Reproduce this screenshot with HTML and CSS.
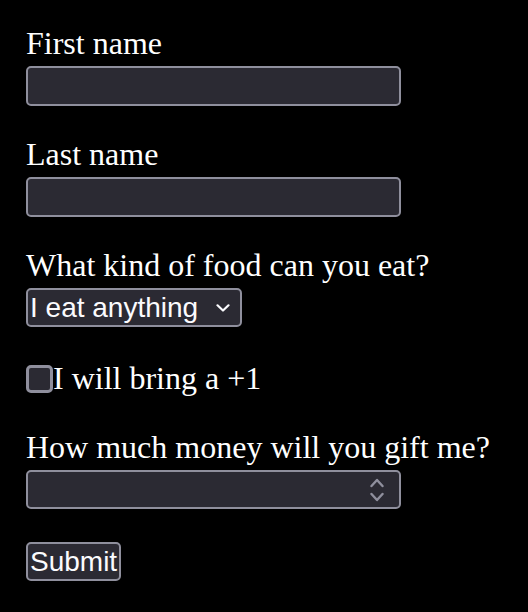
FILE: index.html
```html
<!DOCTYPE html>
<html lang="en">
<head>
<meta charset="utf-8">
<title>RSVP</title>
<link rel="stylesheet" href="styles.css">
</head>
<body>
<form class="form">
  <div class="field field-first">
    <label class="label" for="first">First name</label>
    <input class="text-input" id="first" type="text">
  </div>
  <div class="field">
    <label class="label" for="last">Last name</label>
    <input class="text-input" id="last" type="text">
  </div>
  <div class="field">
    <label class="label" for="food">What kind of food can you eat?</label>
    <div class="select-box">
      <select class="select" id="food">
        <option>I eat anything</option>
        <option>Vegetarian</option>
        <option>Vegan</option>
      </select>
      <svg class="chev" width="14" height="8" viewBox="0 0 14 8" aria-hidden="true"><path d="M1.5 1.3 L7 6.5 L12.5 1.3" fill="none" stroke="#fbfbfe" stroke-width="2.2" stroke-linecap="round" stroke-linejoin="round"/></svg>
    </div>
  </div>
  <div class="check-row">
    <input class="check" id="plus" type="checkbox">
    <label class="check-label" for="plus">I will bring a +1</label>
  </div>
  <div class="field field-money">
    <label class="label" for="money">How much money will you gift me?</label>
    <div class="number-box">
      <input class="number" id="money" type="number">
      <svg class="spin" width="14" height="26" viewBox="0 0 14 26" aria-hidden="true"><path d="M1.5 9 L7 3 L12.5 9 M1.5 17 L7 23 L12.5 17" fill="none" stroke="#8f8f9d" stroke-width="2.4" stroke-linecap="round" stroke-linejoin="round"/></svg>
    </div>
  </div>
  <button class="submit" type="submit">Submit</button>
</form>
</body>
</html>
```
FILE: styles.css
```css
html, body {
  margin: 0;
  padding: 0;
  background: #000;
}
body {
  color: #fff;
  font-family: "Liberation Serif", "Times New Roman", serif;
  font-size: 32px;
}
.form {
  display: flex;
  flex-direction: column;
  align-items: flex-start;
  padding: 25px 0 0 26px;
}
.field {
  display: flex;
  flex-direction: column;
  align-items: flex-start;
  margin-top: 30px;
}
.field-first {
  margin-top: 0;
}
.label {
  display: block;
  line-height: 37px;
  height: 37px;
  margin-bottom: 4px;
  white-space: nowrap;
}
.text-input,
.select-box,
.number-box,
.submit,
.check {
  box-sizing: border-box;
  border: 2px solid #8f8f9d;
  border-radius: 5px;
  background: #2b2a33;
  color: #fbfbfe;
  font-family: "Liberation Sans", Arial, sans-serif;
  font-size: 28px;
  margin: 0;
}
.text-input {
  width: 375px;
  height: 40px;
  padding: 0 4px;
  outline: none;
}
.select-box {
  display: flex;
  align-items: center;
  width: 216px;
  height: 39px;
}
.select {
  flex: 1;
  min-width: 0;
  appearance: none;
  -webkit-appearance: none;
  background: transparent;
  border: none;
  color: #fbfbfe;
  font-family: "Liberation Sans", Arial, sans-serif;
  font-size: 28px;
  padding: 0 0 0 2px;
  margin: 0;
  height: 35px;
  outline: none;
}
.chev {
  flex: none;
  margin-right: 10px;
  margin-left: 4px;
}
.check-row {
  display: flex;
  align-items: flex-start;
  margin-top: 33px;
  height: 37px;
}
.check {
  appearance: none;
  -webkit-appearance: none;
  width: 27px;
  height: 28px;
  border-width: 3px;
  border-radius: 5px;
  margin-top: 5px;
  flex: none;
}
.check-label {
  line-height: 37px;
  white-space: nowrap;
}
.field-money {
  margin-top: 32px;
}
.number-box {
  display: flex;
  align-items: center;
  width: 375px;
  height: 39px;
}
.number {
  flex: 1;
  min-width: 0;
  appearance: textfield;
  -moz-appearance: textfield;
  background: transparent;
  border: none;
  color: #fbfbfe;
  font-family: "Liberation Sans", Arial, sans-serif;
  font-size: 28px;
  padding: 0 4px;
  margin: 0;
  height: 35px;
  outline: none;
}
.number::-webkit-inner-spin-button,
.number::-webkit-outer-spin-button {
  -webkit-appearance: none;
  margin: 0;
}
.spin {
  flex: none;
  margin-right: 15px;
}
.submit {
  margin-top: 33px;
  height: 39px;
  padding: 0 2px;
  line-height: 35px;
}
```
